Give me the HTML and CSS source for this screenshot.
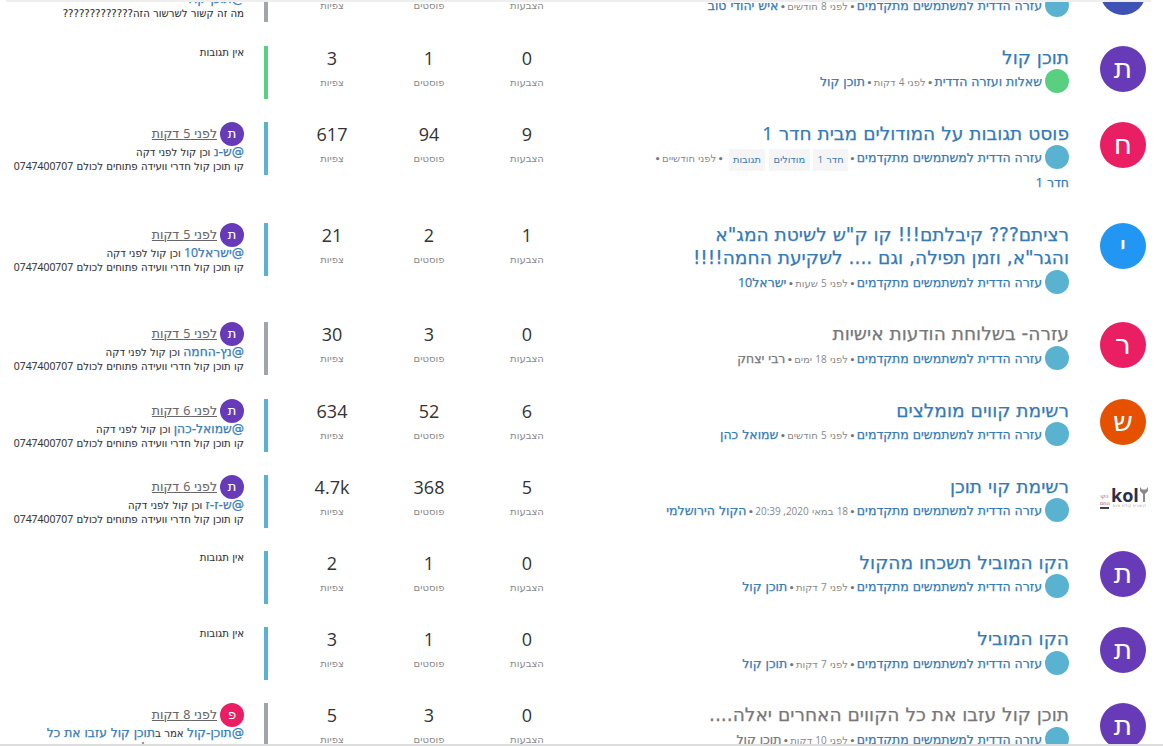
FILE: index.html
```html
<!DOCTYPE html>
<html lang="he" dir="rtl">
<head>
  <meta charset="UTF-8" />
  <meta name="viewport" content="width=device-width, initial-scale=1" />
  <title>נושאים אחרונים</title>
  <link rel="stylesheet" href="styles.css">
</head>
<body>
  <div class="top-edge"></div>
  <div class="topic-list">

    <div class="topic">
      <div class="avatar av-indigo">א</div>
      <div class="main">
        <h3 class="title">שאלה על קו</h3>
        <div class="meta"><span class="cat cat-blue"></span><a class="link">עזרה הדדית למשתמשים מתקדמים</a> <b class="dot">•</b> <span class="age">לפני <i class="lat">8</i> חודשים</span> <b class="dot">•</b> <a class="user">איש יהודי טוב</a></div>
      </div>
      <div class="stat stat-votes"><div class="num">2</div><div class="label">הצבעות</div></div>
      <div class="stat stat-posts"><div class="num">7</div><div class="label">פוסטים</div></div>
      <div class="stat stat-views"><div class="num">90</div><div class="label">צפיות</div></div>
      <div class="teaser bar-grey">
        <div class="teaser-head"><span class="mini av-purple">ת</span><a class="time">לפני <i class="lat">4</i> דקות</a></div>
        <p><a class="link">@תוכן-קול</a></p>
        <p>מה זה קשור לשרשור הזה?????????????</p>
      </div>
    </div>

    <div class="topic">
      <div class="avatar av-purple">ת</div>
      <div class="main">
        <h3 class="title">תוכן קול</h3>
        <div class="meta"><span class="cat cat-green"></span><a class="link">שאלות ועזרה הדדית</a> <b class="dot">•</b> <span class="age">לפני <i class="lat">4</i> דקות</span> <b class="dot">•</b> <a class="user">תוכן קול</a></div>
      </div>
      <div class="stat stat-votes"><div class="num">0</div><div class="label">הצבעות</div></div>
      <div class="stat stat-posts"><div class="num">1</div><div class="label">פוסטים</div></div>
      <div class="stat stat-views"><div class="num">3</div><div class="label">צפיות</div></div>
      <div class="teaser bar-green"><p>אין תגובות</p></div>
    </div>

    <div class="topic">
      <div class="avatar av-pink">ח</div>
      <div class="main">
        <h3 class="title">פוסט תגובות על המודולים מבית חדר <i class="lat">1</i></h3>
        <div class="meta"><span class="cat cat-blue"></span><a class="link">עזרה הדדית למשתמשים מתקדמים</a> <b class="dot">•</b> <span class="tag">חדר <i class="lat">1</i></span><span class="tag">מודולים</span><span class="tag">תגובות</span> <b class="dot">•</b> <span class="age">לפני חודשיים</span> <b class="dot">•</b> <a class="user">חדר <i class="lat">1</i></a></div>
      </div>
      <div class="stat stat-votes"><div class="num">9</div><div class="label">הצבעות</div></div>
      <div class="stat stat-posts"><div class="num">94</div><div class="label">פוסטים</div></div>
      <div class="stat stat-views"><div class="num">617</div><div class="label">צפיות</div></div>
      <div class="teaser bar-blue">
        <div class="teaser-head"><span class="mini av-purple">ת</span><a class="time">לפני <i class="lat">5</i> דקות</a></div>
        <p><a class="link">@ש-נ</a> וכן קול לפני דקה</p>
        <p>קו תוכן קול חדרי וועידה פתוחים לכולם <i class="lat">0747400707</i></p>
      </div>
    </div>

    <div class="topic">
      <div class="avatar av-sky">י</div>
      <div class="main">
        <h3 class="title">רציתם??? קיבלתם!!! קו ק"ש לשיטת המג"א והגר"א, וזמן תפילה, וגם .... לשקיעת החמה!!!!</h3>
        <div class="meta"><span class="cat cat-blue"></span><a class="link">עזרה הדדית למשתמשים מתקדמים</a> <b class="dot">•</b> <span class="age">לפני <i class="lat">5</i> שעות</span> <b class="dot">•</b> <a class="user">ישראל<i class="lat">10</i></a></div>
      </div>
      <div class="stat stat-votes"><div class="num">1</div><div class="label">הצבעות</div></div>
      <div class="stat stat-posts"><div class="num">2</div><div class="label">פוסטים</div></div>
      <div class="stat stat-views"><div class="num">21</div><div class="label">צפיות</div></div>
      <div class="teaser bar-blue">
        <div class="teaser-head"><span class="mini av-purple">ת</span><a class="time">לפני <i class="lat">5</i> דקות</a></div>
        <p><a class="link">@ישראל<i class="lat">10</i></a> וכן קול לפני דקה</p>
        <p>קו תוכן קול חדרי וועידה פתוחים לכולם <i class="lat">0747400707</i></p>
      </div>
    </div>

    <div class="topic">
      <div class="avatar av-pink">ר</div>
      <div class="main">
        <h3 class="title title-read">עזרה- בשלוחת הודעות אישיות</h3>
        <div class="meta"><span class="cat cat-blue"></span><a class="link">עזרה הדדית למשתמשים מתקדמים</a> <b class="dot">•</b> <span class="age">לפני <i class="lat">18</i> ימים</span> <b class="dot">•</b> <a class="user user-read">רבי יצחק</a></div>
      </div>
      <div class="stat stat-votes"><div class="num">0</div><div class="label">הצבעות</div></div>
      <div class="stat stat-posts"><div class="num">3</div><div class="label">פוסטים</div></div>
      <div class="stat stat-views"><div class="num">30</div><div class="label">צפיות</div></div>
      <div class="teaser bar-grey">
        <div class="teaser-head"><span class="mini av-purple">ת</span><a class="time">לפני <i class="lat">5</i> דקות</a></div>
        <p><a class="link">@נץ-החמה</a> וכן קול לפני דקה</p>
        <p>קו תוכן קול חדרי וועידה פתוחים לכולם <i class="lat">0747400707</i></p>
      </div>
    </div>

    <div class="topic">
      <div class="avatar av-orange">ש</div>
      <div class="main">
        <h3 class="title">רשימת קווים מומלצים</h3>
        <div class="meta"><span class="cat cat-blue"></span><a class="link">עזרה הדדית למשתמשים מתקדמים</a> <b class="dot">•</b> <span class="age">לפני <i class="lat">5</i> חודשים</span> <b class="dot">•</b> <a class="user">שמואל כהן</a></div>
      </div>
      <div class="stat stat-votes"><div class="num">6</div><div class="label">הצבעות</div></div>
      <div class="stat stat-posts"><div class="num">52</div><div class="label">פוסטים</div></div>
      <div class="stat stat-views"><div class="num">634</div><div class="label">צפיות</div></div>
      <div class="teaser bar-blue">
        <div class="teaser-head"><span class="mini av-purple">ת</span><a class="time">לפני <i class="lat">6</i> דקות</a></div>
        <p><a class="link">@שמואל-כהן</a> וכן קול לפני דקה</p>
        <p>קו תוכן קול חדרי וועידה פתוחים לכולם <i class="lat">0747400707</i></p>
      </div>
    </div>

    <div class="topic">
      <div class="avatar logo" dir="ltr">
        <div class="logo-side">
          <span>הקו</span>
          <span>החם</span>
          <span class="logo-rule"></span>
        </div>
        <div class="logo-body">
          <div class="logo-line">
            <span class="logo-text">kol</span>
            <svg viewBox="0 0 8 15" width="8" height="15"><path d="M0 0v4l3 3v8h2V7l3-3V0L6 2.500H2z" fill="#8a8a8d"/></svg>
          </div>
          <div class="logo-sub">קישורית קולית חינם</div>
        </div>
      </div>
      <div class="main">
        <h3 class="title">רשימת קוי תוכן</h3>
        <div class="meta"><span class="cat cat-blue"></span><a class="link">עזרה הדדית למשתמשים מתקדמים</a> <b class="dot">•</b> <span class="age"><i class="lat">18</i> במאי <i class="lat">2020, 20:39</i></span> <b class="dot">•</b> <a class="user">הקול הירושלמי</a></div>
      </div>
      <div class="stat stat-votes"><div class="num">5</div><div class="label">הצבעות</div></div>
      <div class="stat stat-posts"><div class="num">368</div><div class="label">פוסטים</div></div>
      <div class="stat stat-views"><div class="num">4.7k</div><div class="label">צפיות</div></div>
      <div class="teaser bar-blue">
        <div class="teaser-head"><span class="mini av-purple">ת</span><a class="time">לפני <i class="lat">6</i> דקות</a></div>
        <p><a class="link">@ש-ז-ז</a> וכן קול לפני דקה</p>
        <p>קו תוכן קול חדרי וועידה פתוחים לכולם <i class="lat">0747400707</i></p>
      </div>
    </div>

    <div class="topic">
      <div class="avatar av-purple">ת</div>
      <div class="main">
        <h3 class="title">הקו המוביל תשכחו מהקול</h3>
        <div class="meta"><span class="cat cat-blue"></span><a class="link">עזרה הדדית למשתמשים מתקדמים</a> <b class="dot">•</b> <span class="age">לפני <i class="lat">7</i> דקות</span> <b class="dot">•</b> <a class="user">תוכן קול</a></div>
      </div>
      <div class="stat stat-votes"><div class="num">0</div><div class="label">הצבעות</div></div>
      <div class="stat stat-posts"><div class="num">1</div><div class="label">פוסטים</div></div>
      <div class="stat stat-views"><div class="num">2</div><div class="label">צפיות</div></div>
      <div class="teaser bar-blue"><p>אין תגובות</p></div>
    </div>

    <div class="topic">
      <div class="avatar av-purple">ת</div>
      <div class="main">
        <h3 class="title">הקו המוביל</h3>
        <div class="meta"><span class="cat cat-blue"></span><a class="link">עזרה הדדית למשתמשים מתקדמים</a> <b class="dot">•</b> <span class="age">לפני <i class="lat">7</i> דקות</span> <b class="dot">•</b> <a class="user">תוכן קול</a></div>
      </div>
      <div class="stat stat-votes"><div class="num">0</div><div class="label">הצבעות</div></div>
      <div class="stat stat-posts"><div class="num">1</div><div class="label">פוסטים</div></div>
      <div class="stat stat-views"><div class="num">3</div><div class="label">צפיות</div></div>
      <div class="teaser bar-blue"><p>אין תגובות</p></div>
    </div>

    <div class="topic">
      <div class="avatar av-purple">ת</div>
      <div class="main">
        <h3 class="title title-read">תוכן קול עזבו את כל הקווים האחרים יאלה....</h3>
        <div class="meta"><span class="cat cat-blue"></span><a class="link">עזרה הדדית למשתמשים מתקדמים</a> <b class="dot">•</b> <span class="age">לפני <i class="lat">10</i> דקות</span> <b class="dot">•</b> <a class="user user-read">תוכן קול</a></div>
      </div>
      <div class="stat stat-votes"><div class="num">0</div><div class="label">הצבעות</div></div>
      <div class="stat stat-posts"><div class="num">3</div><div class="label">פוסטים</div></div>
      <div class="stat stat-views"><div class="num">5</div><div class="label">צפיות</div></div>
      <div class="teaser bar-grey">
        <div class="teaser-head"><span class="mini av-pink">פ</span><a class="time">לפני <i class="lat">8</i> דקות</a></div>
        <p><a class="link">@תוכן-קול</a> אמר ב<a class="link">תוכן קול עזבו את כל הקווים האחרים יאלה....</a></p>
      </div>
    </div>

  </div>
  <div class="bottom-edge"></div>
</body>
</html>
```

FILE: styles.css
```css
html, body {
  height: 100%;
  overflow: hidden;
}

body {
  margin: 0;
  background: #fff;
  color: #333;
  font-family: "DejaVu Sans", "Noto Sans", sans-serif;
  font-size: 12.5px;
}

/* digits keep the latin face, hebrew comes from DejaVu */
.lat {
  font-family: "Open Sans", sans-serif;
  font-style: normal;
  line-height: 1;
}

/* thin lines left at the window edges */
.top-edge {
  position: fixed;
  top: 0;
  left: 6px;
  width: 1145px;
  height: 2px;
  background: #eee;
}

.bottom-edge {
  position: fixed;
  bottom: 0;
  left: 0;
  right: 0;
  height: 2px;
  background: #ddd;
}

/* page is scrolled, first row is cut by the top of the window */
.topic-list {
  margin-top: -30.6px;
  padding: 0 17px 0 0;
}

.topic {
  display: flex;
  align-items: flex-start;
  padding-bottom: 28px;
}

.avatar {
  flex: none;
  width: 46px;
  height: 46px;
  line-height: 46px;
  border-radius: 50%;
  color: #fff;
  font-size: 28px;
  text-align: center;
}

.av-indigo { background: #3f51b5; }
.av-purple { background: #673ab7; }
.av-pink { background: #e91e63; }
.av-sky { background: #2196f3; }
.av-orange { background: #e65100; }

.logo {
  display: flex;
  align-items: center;
  gap: 2px;
  border-radius: 0;
  background: #fff;
  line-height: 1;
  filter: blur(0.4px);
}

.logo-side {
  display: flex;
  flex-direction: column;
  gap: 1px;
  width: 9px;
  margin-top: 6px;
  color: #9a3b4a;
  font-size: 5px;
  line-height: 6px;
}

.logo-rule {
  height: 2px;
  background: #444;
}

.logo-body {
  flex: 1;
}

.logo-line {
  display: flex;
  align-items: flex-start;
  gap: 1px;
}

.logo-text {
  color: #2b2d4f;
  font-family: "Open Sans", sans-serif;
  font-size: 18px;
  font-weight: 700;
  line-height: 16px;
}

.logo-sub {
  color: #aaa;
  font-size: 4px;
  line-height: 5px;
}

.main {
  flex: none;
  width: 418px;
  margin-right: 31px;
  margin-left: 77px;
}

.title {
  margin: 0;
  color: #337ab7;
  font-size: 18.6px;
  font-weight: 400;
  line-height: 23.4px;
  -webkit-text-stroke: 0.25px;
}

.title-read { color: #777; }

.meta {
  margin-bottom: -1px;
  padding-top: 1px;
  color: #777;
  line-height: 24.8px;
  word-spacing: -2.5px;
}

.cat {
  display: inline-block;
  width: 24px;
  height: 24px;
  margin-top: -1px;
  margin-left: 3px;
  border-radius: 50%;
  vertical-align: top;
}

.cat-blue { background: #59b3d0; }
.cat-green { background: #59d07f; }

.link, .user {
  color: #337ab7;
  word-spacing: normal;
  -webkit-text-stroke: 0.25px;
}

.user-read { color: #777; }

.dot {
  font-size: 9px;
  line-height: 1;
}

.age {
  color: #888;
  font-size: 10px;
  line-height: 1;
  word-spacing: normal;
}

.tag {
  display: inline-block;
  margin-top: 2.500px;
  margin-left: 3.500px;
  padding: 0 4.500px;
  background: #f5f5f5;
  color: #337ab7;
  font-size: 9.800px;
  line-height: 22px;
  word-spacing: normal;
  vertical-align: top;
}

.stat {
  flex: none;
  text-align: center;
}

.stat-votes { width: 94px; }
.stat-posts { width: 102px; }
.stat-views { width: 92px; }

.num {
  color: #333;
  font-family: "Open Sans", sans-serif;
  font-size: 18px;
  line-height: 24px;
}

.label {
  margin-top: 3px;
  color: #888;
  font-size: 10px;
  line-height: 20px;
}

.teaser {
  flex: none;
  box-sizing: border-box;
  width: 268px;
  height: 53px;
  margin-right: 18px;
  margin-bottom: -5px;
  padding-right: 20px;
  padding-left: 12px;
  border-right: 4px solid #999;
  font-size: 10.2px;
  line-height: 14px;
  -webkit-text-stroke: 0.1px;
}

.bar-grey { border-color: #a0a5ab; }
.bar-green { border-color: #59d07f; }
.bar-blue { border-color: #59b3d0; }

.teaser p {
  margin: 0;
}

.teaser .link {
  font-size: 12.300px;
  line-height: 1;
}

.teaser .lat {
  font-size: 10.400px;
}

.teaser .link .lat {
  font-size: 12.300px;
}

.teaser-head {
  display: flex;
  align-items: center;
  gap: 3px;
  height: 24px;
}

.mini {
  flex: none;
  width: 24px;
  height: 24px;
  line-height: 24px;
  border-radius: 50%;
  color: #fff;
  font-size: 13px;
  text-align: center;
}

.time {
  color: #666;
  font-size: 12.500px;
  text-decoration: underline;
}

.teaser .time .lat {
  font-size: 12.500px;
}
```
